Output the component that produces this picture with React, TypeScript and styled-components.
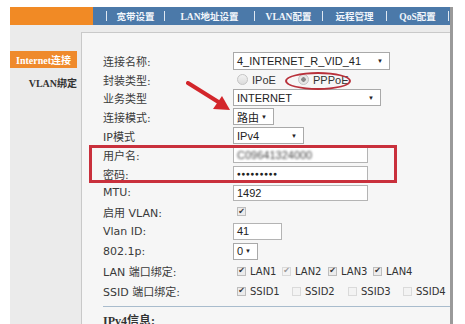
import styled, { createGlobalStyle } from 'styled-components';

const GlobalStyle = createGlobalStyle`
  html, body {
    margin: 0;
    padding: 0;
    background: #ffffff;
  }
  body {
    width: 465px;
    height: 324px;
    overflow: hidden;
    font-family: "DejaVu Sans", "Noto Sans CJK SC", sans-serif;
  }
`;

const S = {
  Frame: styled.div`
    margin: 7px 0 0 10px;
    width: 440px;
    height: 317px;
    border-right: 3px solid #9a9a9a;
    display: flex;
    flex-direction: column;
    overflow: hidden;
  `,

  TopBar: styled.div`
    display: flex;
    height: 18px;
    flex-shrink: 0;
  `,
  Brand: styled.div`
    width: 83px;
    background: #f18a25;
  `,
  Menu: styled.div`
    flex: 1;
    display: flex;
    align-items: center;
    padding-left: 13px;
    background: #4b79a9;
    color: #f2f6fb;
    font-family: "Liberation Serif", "Noto Sans CJK SC", serif;
    font-size: 9.5px;
    font-weight: bold;
  `,
  MenuSep: styled.span`
    width: 1px;
    height: 10px;
    background: #dfe8f2;
  `,
  MenuItem: styled.span<{ $w: number }>`
    width: ${({ $w }) => $w - 1}px;
    text-align: center;
    white-space: nowrap;
  `,

  Body: styled.div`
    flex: 1;
    display: flex;
    padding-top: 7px;
    background: #ebebeb;
  `,
  Sidebar: styled.div`
    width: 71px;
    flex-shrink: 0;
    padding-top: 19px;
    display: flex;
    flex-direction: column;
    font-family: "Liberation Serif", "Noto Sans CJK SC", serif;
    font-weight: bold;
    font-size: 10px;
  `,
  SideTab: styled.div<{ $active?: boolean }>`
    height: 17px;
    width: 67px;
    display: flex;
    align-items: center;
    justify-content: ${({ $active }) => ($active ? 'center' : 'flex-end')};
    background: ${({ $active }) => ($active ? '#ef8a2c' : 'transparent')};
    color: ${({ $active }) => ($active ? '#ffffff' : '#333333')};
    margin-bottom: 6px;
    white-space: nowrap;
  `,

  Panel: styled.div`
    flex: 1;
    position: relative;
    background: #f6f6f6;
    border-left: 1px solid #c9c9c9;
    border-top: 1px solid #c9c9c9;
    padding: 18px 0 0 21px;
    overflow: hidden;
  `,

  Row: styled.div<{ $h: number }>`
    display: flex;
    align-items: center;
    height: ${({ $h }) => $h}px;
  `,
  Label: styled.div`
    width: 130px;
    flex-shrink: 0;
    font-size: 11px;
    color: #3a3a3a;
    white-space: nowrap;
  `,

  Select: styled.div<{ $w: number; $h?: number }>`
    width: ${({ $w }) => $w}px;
    height: ${({ $h }) => $h ?? 17}px;
    box-sizing: border-box;
    border: 1px solid #a9a9a9;
    background: #ffffff;
    display: flex;
    align-items: center;
    justify-content: space-between;
    padding: 0 6px 0 3px;
    font-family: "Liberation Sans", "Noto Sans CJK SC", sans-serif;
    font-size: 11px;
    color: #222222;
    white-space: nowrap;
  `,
  Arrow: styled.span`
    font-size: 6px;
    color: #222222;
  `,
  Field: styled.div<{ $w: number; $h?: number }>`
    width: ${({ $w }) => $w}px;
    height: ${({ $h }) => $h ?? 16}px;
    box-sizing: border-box;
    border: 1px solid #b4b4b4;
    background: #ffffff;
    display: flex;
    align-items: center;
    padding-left: 3px;
    font-family: "Liberation Sans", sans-serif;
    font-size: 11px;
    color: #222222;
    white-space: nowrap;
    overflow: hidden;
  `,
  Blurred: styled.span`
    color: #4a4a4a;
    filter: blur(0.8px);
  `,
  Dots: styled.span`
    font-size: 6.5px;
    letter-spacing: 0.6px;
    color: #222222;
  `,

  Choice: styled.label<{ $w?: number }>`
    display: flex;
    align-items: center;
    gap: 4px;
    width: ${({ $w }) => ($w ? `${$w}px` : 'auto')};
    flex-shrink: 0;
    font-family: "DejaVu Sans", sans-serif;
    font-size: 10px;
    color: #333333;
    white-space: nowrap;
  `,
  ChoiceSans: styled.label<{ $w?: number }>`
    display: flex;
    align-items: center;
    gap: 4px;
    width: ${({ $w }) => ($w ? `${$w}px` : 'auto')};
    flex-shrink: 0;
    font-family: "Liberation Sans", sans-serif;
    font-size: 11px;
    color: #333333;
  `,
  Radio: styled.span<{ $on?: boolean }>`
    width: 9px;
    height: 9px;
    border-radius: 50%;
    border: 1px solid #c4c4c4;
    background: ${({ $on }) =>
      $on
        ? 'radial-gradient(circle, #8a8a8a 0 2px, #e6e6e6 2.5px)'
        : 'linear-gradient(#f2f2f2, #dcdcdc)'};
  `,
  Check: styled.span<{ $on?: boolean; $faint?: boolean }>`
    width: 9px;
    height: 9px;
    box-sizing: border-box;
    border: 1px solid ${({ $faint }) => ($faint ? '#dadada' : '#bdbdbd')};
    background: ${({ $faint }) => ($faint ? '#f3f3f3' : '#ececec')};
    display: flex;
    align-items: center;
    justify-content: center;
    font-size: 8px;
    line-height: 1;
    color: ${({ $faint }) => ($faint ? '#9a9a9a' : '#333333')};
  `,
  Boxes: styled.div`
    display: flex;
    align-items: center;
    margin-left: 4px;
  `,

  Divider: styled.div`
    margin: 5px 0 0 0;
    height: 1px;
    background: #a9bccd;
  `,
  Section: styled.div`
    margin-top: 4px;
    font-family: "Liberation Serif", "Noto Sans CJK SC", serif;
    font-weight: bold;
    font-size: 12px;
    color: #333333;
  `,

  RedBox: styled.div`
    position: absolute;
    left: 7px;
    top: 112px;
    width: 308px;
    height: 38px;
    box-sizing: border-box;
    border: 3px solid #c9303c;
  `,
  RedOval: styled.div`
    position: absolute;
    left: 203px;
    top: 39px;
    width: 66px;
    height: 18px;
    box-sizing: border-box;
    border: 2.5px solid #b8303a;
    border-radius: 50%;
  `,
  ArrowMark: styled.svg`
    position: absolute;
    left: 104px;
    top: 48px;
  `,
};

function Sel({ w, h, value }: { w: number; h?: number; value: string }) {
  return (
    <S.Select $w={w} $h={h}>
      <span>{value}</span>
      <S.Arrow>▼</S.Arrow>
    </S.Select>
  );
}

function Box({ label, on, faint, w }: { label: string; on?: boolean; faint?: boolean; w: number }) {
  return (
    <S.Choice $w={w}>
      <S.Check $on={on} $faint={faint}>{on ? '✔' : ''}</S.Check>
      {label}
    </S.Choice>
  );
}

export default function App() {
  return (
    <>
      <GlobalStyle />
      <S.Frame>
        <S.TopBar>
          <S.Brand />
          <S.Menu>
            <S.MenuSep />
            <S.MenuItem $w={58}>宽带设置</S.MenuItem>
            <S.MenuSep />
            <S.MenuItem $w={90}>LAN地址设置</S.MenuItem>
            <S.MenuSep />
            <S.MenuItem $w={68}>VLAN配置</S.MenuItem>
            <S.MenuSep />
            <S.MenuItem $w={64}>远程管理</S.MenuItem>
            <S.MenuSep />
            <S.MenuItem $w={62}>QoS配置</S.MenuItem>
            <S.MenuSep />
          </S.Menu>
        </S.TopBar>

        <S.Body>
          <S.Sidebar>
            <S.SideTab $active>Internet连接</S.SideTab>
            <S.SideTab>VLAN绑定</S.SideTab>
          </S.Sidebar>

          <S.Panel>
            <S.Row $h={20}>
              <S.Label>连接名称:</S.Label>
              <Sel w={157} h={18} value="4_INTERNET_R_VID_41" />
            </S.Row>
            <S.Row $h={17}>
              <S.Label>封装类型:</S.Label>
              <S.Boxes>
                <S.ChoiceSans $w={61}>
                  <S.Radio />
                  IPoE
                </S.ChoiceSans>
                <S.ChoiceSans>
                  <S.Radio $on />
                  PPPoE
                </S.ChoiceSans>
              </S.Boxes>
            </S.Row>
            <S.Row $h={19}>
              <S.Label>业务类型</S.Label>
              <Sel w={148} value="INTERNET" />
            </S.Row>
            <S.Row $h={19}>
              <S.Label>连接模式:</S.Label>
              <Sel w={41} value="路由" />
            </S.Row>
            <S.Row $h={19}>
              <S.Label>IP模式</S.Label>
              <Sel w={71} value="IPv4" />
            </S.Row>
            <S.Row $h={19}>
              <S.Label>用户名:</S.Label>
              <S.Field $w={135}>
                <S.Blurred>C09641324000</S.Blurred>
              </S.Field>
            </S.Row>
            <S.Row $h={19}>
              <S.Label>密码:</S.Label>
              <S.Field $w={135}>
                <S.Dots>●●●●●●●●●</S.Dots>
              </S.Field>
            </S.Row>
            <S.Row $h={19}>
              <S.Label>MTU:</S.Label>
              <S.Field $w={135}>1492</S.Field>
            </S.Row>
            <S.Row $h={19}>
              <S.Label>启用 VLAN:</S.Label>
              <S.Boxes>
                <S.Check $on>✔</S.Check>
              </S.Boxes>
            </S.Row>
            <S.Row $h={20}>
              <S.Label>Vlan ID:</S.Label>
              <S.Field $w={49} $h={17}>41</S.Field>
            </S.Row>
            <S.Row $h={20}>
              <S.Label>802.1p:</S.Label>
              <Sel w={25} value="0" />
            </S.Row>
            <S.Row $h={20}>
              <S.Label>LAN 端口绑定:</S.Label>
              <S.Boxes>
                <Box w={45} label="LAN1" on />
                <Box w={46} label="LAN2" on faint />
                <Box w={45} label="LAN3" on />
                <Box w={50} label="LAN4" on />
              </S.Boxes>
            </S.Row>
            <S.Row $h={20}>
              <S.Label>SSID 端口绑定:</S.Label>
              <S.Boxes>
                <Box w={55} label="SSID1" on />
                <Box w={56} label="SSID2" faint />
                <Box w={55} label="SSID3" faint />
                <Box w={50} label="SSID4" faint />
              </S.Boxes>
            </S.Row>
            <S.Divider />
            <S.Section>IPv4信息:</S.Section>

            <S.RedOval />
            <S.RedBox />
            <S.ArrowMark width="50" height="34" viewBox="0 0 50 34">
              <line x1="2" y1="2" x2="34" y2="22" stroke="#d3262b" strokeWidth="4" strokeLinecap="round" />
              <polygon points="44,29 27,28 36,15" fill="#d3262b" />
            </S.ArrowMark>
          </S.Panel>
        </S.Body>
      </S.Frame>
    </>
  );
}
